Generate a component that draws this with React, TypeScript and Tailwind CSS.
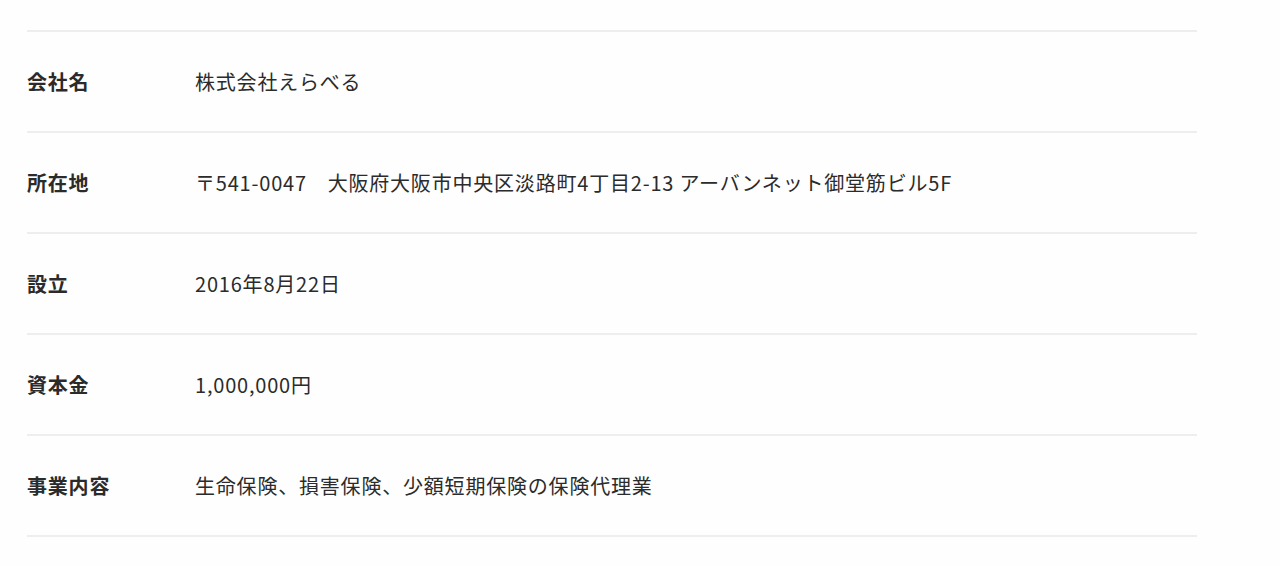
import React from 'react'

const ROWS = [
  { label: '会社名', value: '株式会社えらべる' },
  { label: '所在地', value: '〒541-0047　大阪府大阪市中央区淡路町4丁目2-13 アーバンネット御堂筋ビル5F' },
  { label: '設立', value: '2016年8月22日' },
  { label: '資本金', value: '1,000,000円' },
  { label: '事業内容', value: '生命保険、損害保険、少額短期保険の保険代理業' },
]

export default function App() {
  return (
    <div
      className="min-h-[566px] bg-[#fefefe] pt-[30px] text-[#2b2b2b]"
      style={{ fontFamily: '"Noto Sans CJK JP", "Noto Sans", sans-serif' }}
    >
      <dl className="ml-[27px] w-[1170px] border-t-2 border-[#eeeeee]">
        {ROWS.map((row) => (
          <div key={row.label} className="flex items-center border-b-2 border-[#eeeeee] h-[101px]">
            <dt className="w-[168px] shrink-0 text-[20px] font-bold leading-[30px] tracking-[0.04em]">{row.label}</dt>
            <dd className="text-[20px] leading-[30px] tracking-[0.04em]">{row.value}</dd>
          </div>
        ))}
      </dl>
    </div>
  )
}
